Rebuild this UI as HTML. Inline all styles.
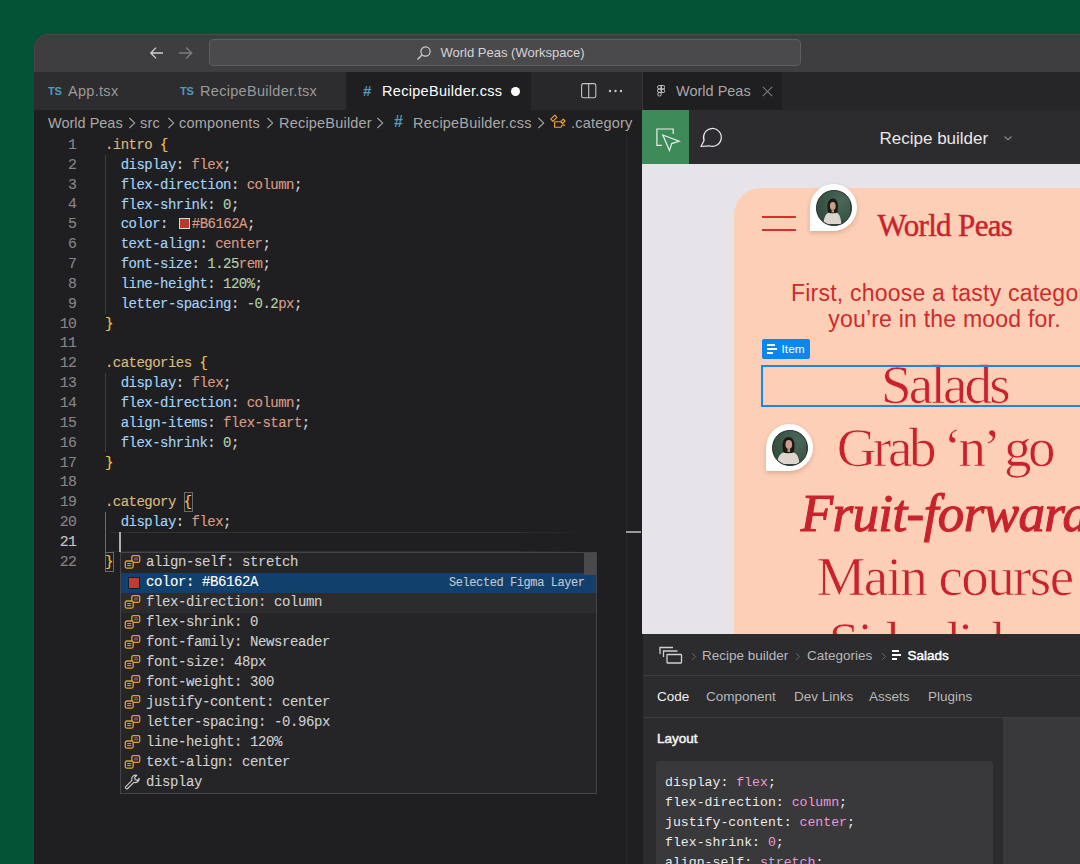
<!DOCTYPE html>
<html><head><meta charset="utf-8">
<style>
*{box-sizing:border-box;margin:0;padding:0}
html,body{width:1080px;height:864px;overflow:hidden;background:#055336;font-family:"Liberation Sans",sans-serif}
.abs{position:absolute}
#win{position:absolute;left:34px;top:34px;width:1100px;height:900px;border-radius:14px 0 0 0;overflow:hidden;background:#1f1e21}
#title{position:absolute;left:0;top:0;width:1100px;height:38px;background:#3e3d40;box-shadow:inset 0 1px 0 #50494b,inset 1px 0 0 #4a4446;border-radius:14px 0 0 0}
#cc{position:absolute;left:175px;top:5px;width:592px;height:27px;background:#4a494c;border:1px solid #5e5d60;border-radius:4px}
#cc span{position:absolute;left:230.5px;top:5px;font-size:13px;color:#d4d4d4;white-space:nowrap}
#tabs{position:absolute;left:0;top:38px;width:608px;height:38px;background:#2d2c2f}
.tab{position:absolute;top:0;height:38px;font-size:14.5px;color:#9a9a9a;white-space:nowrap;letter-spacing:0.3px}
.tab .lbl{position:absolute;top:11px}
.ts{position:absolute;top:13px;font-size:11px;font-weight:bold;color:#519aba;letter-spacing:-0.3px}
#bc{position:absolute;left:14px;top:81px;font-size:14.5px;color:#a8a8a8;white-space:nowrap}
.code{position:absolute;font-family:"Liberation Mono",monospace;font-size:14px;letter-spacing:-0.53px;white-space:pre;line-height:19.86px}
.ln{position:absolute;left:0;width:42px;text-align:right;font-family:"Liberation Mono",monospace;font-size:14.8px;letter-spacing:-0.8px;line-height:19.86px;color:#858585}
.p{color:#a2d3f6}.v{color:#d99a82}.n{color:#b5cea8}.s{color:#d7ba7d}.b{color:#efc63e}.w{color:#d4d4d4}

.sw{display:inline-block;width:11px;height:11px;background:#c2352c;border:1px solid #d9d9d9;margin:0 2px 0 3px;vertical-align:-1px}
.code,.ln{-webkit-text-stroke:0.15px currentColor}
.ig{position:absolute;width:1px;background:#3c3b3e}
#sug{position:absolute;left:86px;top:518px;width:477px;height:242px;background:#252427;border:1px solid #454448}
.row{position:absolute;left:0;width:464px;height:20px;font-family:"Liberation Mono",monospace;font-size:14px;letter-spacing:-0.4px;-webkit-text-stroke:0.1px currentColor;line-height:20px;color:#d0d0d0;white-space:pre}
.row .t{position:absolute;left:25px;top:-0.6px}
.row svg{position:absolute;left:3px;top:2.3px}

#rp{position:absolute;left:608px;top:38px;width:500px;height:870px;background:#2c2b2e}
.serif{font-family:"Liberation Serif",serif;color:#c8232c;white-space:nowrap;position:absolute}
.cat{position:absolute;left:0;width:421px;text-align:center;font-family:"Liberation Serif",serif;font-size:55px;line-height:64px;color:#c8232c;white-space:nowrap;letter-spacing:-1.58px;-webkit-text-stroke:0.7px #fdcfb6}
.pin{position:absolute;width:47px;height:47px;background:#fff;border-radius:50% 50% 50% 0;box-shadow:0 2px 4px rgba(120,60,40,.25)}
.pin .av{position:absolute;left:6px;top:6px;width:35.5px;height:35.5px;border-radius:50%;background:#2f4a3c;border:1.6px solid #2a2a2a;overflow:hidden}
.av svg{position:absolute;left:-1.6px;top:-1.6px}
.bp{position:absolute;font-size:13.5px;color:#b8b8b8;white-space:nowrap}
.mono2{font-family:"Liberation Mono",monospace;font-size:13.2px;line-height:20px;color:#ebebeb;white-space:pre}
.pk{color:#e99bd6}
</style></head><body>
<div id="win">
  <div id="title">
    <svg class="abs" style="left:113px;top:11px" width="18" height="16" viewBox="0 0 18 16"><path d="M16 8H3.8M9 2.6 3.8 8 9 13.4" fill="none" stroke="#d0d0d0" stroke-width="1.3"/></svg>
    <svg class="abs" style="left:143px;top:11px" width="18" height="16" viewBox="0 0 18 16"><path d="M2 8h12.8M9 2.6 14.8 8 9 13.4" fill="none" stroke="#7d7c7f" stroke-width="1.3"/></svg>
    <div id="cc">
      <svg class="abs" style="left:206px;top:5px" width="16" height="16" viewBox="0 0 16 16"><circle cx="9.5" cy="6.5" r="4.6" fill="none" stroke="#cfcfcf" stroke-width="1.2"/><path d="M6.2 9.8 1.5 14.5" stroke="#cfcfcf" stroke-width="1.3"/></svg>
      <span>World Peas (Workspace)</span>
    </div>
  </div>
  <div id="tabs">
    <div class="tab" style="left:0;width:130px"><span class="ts" style="left:14px">TS</span><span class="lbl" style="left:34px">App.tsx</span></div>
    <div class="tab" style="left:130px;width:182px"><span class="ts" style="left:16px">TS</span><span class="lbl" style="left:36px">RecipeBuilder.tsx</span></div>
    <div class="tab" style="left:312px;width:185px;background:#1f1e21;color:#ffffff"><span class="abs" style="left:17px;top:10px;font-size:15px;font-weight:bold;color:#519aba">#</span><span class="lbl" style="left:36px">RecipeBuilder.css</span>
      <div class="abs" style="left:165px;top:15px;width:9px;height:9px;border-radius:50%;background:#ffffff"></div></div>
    <div class="tab" style="left:497px;width:111px;background:#28272a">
      <svg class="abs" style="left:49.5px;top:11px" width="16" height="16" viewBox="0 0 16 16"><rect x="0.6" y="0.6" width="14.2" height="14.2" rx="1.8" fill="none" stroke="#c5c5c5" stroke-width="1.1"/><path d="M7.7 1v14" stroke="#c5c5c5" stroke-width="1.1"/></svg>
      <svg class="abs" style="left:77px;top:17px" width="16" height="4" viewBox="0 0 16 4"><circle cx="2" cy="2" r="1.2" fill="#c5c5c5"/><circle cx="7.5" cy="2" r="1.2" fill="#c5c5c5"/><circle cx="13" cy="2" r="1.2" fill="#c5c5c5"/></svg>
    </div>
  </div>
  <div class="abs" style="left:0;top:76px;width:608px;height:25px;font-size:14.5px;color:#a8a8a8;white-space:nowrap;letter-spacing:0.2px">
<span class="abs" style="left:14px;top:4.5px;letter-spacing:0">World Peas</span>
<span class="abs" style="left:106px;top:4.5px">src</span>
<span class="abs" style="left:145px;top:4.5px">components</span>
<span class="abs" style="left:245px;top:4.5px">RecipeBuilder</span>
<span class="abs" style="left:360px;top:2.5px;font-weight:bold;color:#519aba;font-size:16px">#</span>
<span class="abs" style="left:379px;top:4.5px">RecipeBuilder.css</span>
<span class="abs" style="left:537px;top:4.5px">.category</span>
</div>
<svg class="abs" style="left:94px;top:82.5px" width="8" height="12" viewBox="0 0 8 12"><path d="M1.4 1 6.7 6 1.4 11" fill="none" stroke="#a0a0a0" stroke-width="1.1"/></svg><svg class="abs" style="left:133px;top:82.5px" width="8" height="12" viewBox="0 0 8 12"><path d="M1.4 1 6.7 6 1.4 11" fill="none" stroke="#a0a0a0" stroke-width="1.1"/></svg><svg class="abs" style="left:232px;top:82.5px" width="8" height="12" viewBox="0 0 8 12"><path d="M1.4 1 6.7 6 1.4 11" fill="none" stroke="#a0a0a0" stroke-width="1.1"/></svg><svg class="abs" style="left:341.5px;top:82.5px" width="8" height="12" viewBox="0 0 8 12"><path d="M1.4 1 6.7 6 1.4 11" fill="none" stroke="#a0a0a0" stroke-width="1.1"/></svg><svg class="abs" style="left:503px;top:82.5px" width="8" height="12" viewBox="0 0 8 12"><path d="M1.4 1 6.7 6 1.4 11" fill="none" stroke="#a0a0a0" stroke-width="1.1"/></svg>
<svg class="abs" style="left:514px;top:79px" width="20" height="17" viewBox="0 0 20 17"><g fill="none" stroke="#e8a33e" stroke-width="1.15" stroke-linejoin="round"><path d="M2.8 6.2 6.8 2.1 8.9 4.4 4.9 8.3Z"/><path d="M6.6 8.7V14.2H13.5M6.6 8.7H12.7"/><path d="M12.7 8.7 15.2 6.2 17 8 14.5 10.5Z"/><path d="M13.5 14.2a1.8 1.8 0 0 1 3.3-1.4"/></g></svg>
  <div class="ln" style="top:101.8px">1<br>2<br>3<br>4<br>5<br>6<br>7<br>8<br>9<br>10<br>11<br>12<br>13<br>14<br>15<br>16<br>17<br>18<br>19<br>20<br><span style="color:#c6c6c6">21</span><br>22</div>
<div class="code" style="left:71px;top:102px"><span class="s">.intro</span> <span class="b">{</span>
  <span class="p">display</span><span class="w">:</span> <span class="v">flex</span><span class="w">;</span>
  <span class="p">flex-direction</span><span class="w">:</span> <span class="v">column</span><span class="w">;</span>
  <span class="p">flex-shrink</span><span class="w">:</span> <span class="n">0</span><span class="w">;</span>
  <span class="p">color</span><span class="w">:</span> <i class="sw"></i><span class="v">#B6162A</span><span class="w">;</span>
  <span class="p">text-align</span><span class="w">:</span> <span class="v">center</span><span class="w">;</span>
  <span class="p">font-size</span><span class="w">:</span> <span class="n">1.25</span><span class="v">rem</span><span class="w">;</span>
  <span class="p">line-height</span><span class="w">:</span> <span class="n">120%</span><span class="w">;</span>
  <span class="p">letter-spacing</span><span class="w">:</span> <span class="n">-0.2</span><span class="v">px</span><span class="w">;</span>
<span class="b">}</span>

<span class="s">.categories</span> <span class="b">{</span>
  <span class="p">display</span><span class="w">:</span> <span class="v">flex</span><span class="w">;</span>
  <span class="p">flex-direction</span><span class="w">:</span> <span class="v">column</span><span class="w">;</span>
  <span class="p">align-items</span><span class="w">:</span> <span class="v">flex-start</span><span class="w">;</span>
  <span class="p">flex-shrink</span><span class="w">:</span> <span class="n">0</span><span class="w">;</span>
<span class="b">}</span>

<span class="s">.category</span> <span class="b">{</span>
  <span class="p">display</span><span class="w">:</span> <span class="v">flex</span><span class="w">;</span>

<span class="b">}</span></div>

<div class="ig" style="left:71px;top:120.7px;height:158.9px"></div>
<div class="ig" style="left:71px;top:339.1px;height:79.4px"></div>
<div class="ig" style="left:71px;top:478.1px;height:39.9px;background:#6a696c"></div>
<div class="abs" style="left:77px;top:498px;width:480px;height:20px;border-top:1.5px solid #302f32;border-bottom:1px solid #302f32;-webkit-mask-image:linear-gradient(to right,#000 85%,transparent)"></div>
<div class="abs" style="left:85px;top:498px;width:2px;height:20px;background:#aeafad"></div>
<div class="abs" style="left:150px;top:458.3px;width:8.5px;height:20px;border:1px solid #6a6a6a"></div>
<div class="abs" style="left:71px;top:517.9px;width:8.5px;height:20px;border:1px solid #6a6a6a"></div>
<div class="abs" style="left:592px;top:100px;width:1px;height:806px;background:#28272a"></div>
<div class="abs" style="left:592px;top:497px;width:15px;height:2px;background:#9a9a9a"></div>
<div id="sug"><div class="row" style="top:0px"><svg width="17" height="15" viewBox="0 0 17 15"><rect x="7.8" y="0.6" width="7.9" height="6.8" rx="1.5" fill="none" stroke="#e0a13c" stroke-width="1.3"/><path d="M10 3h4M10 4.8h4" stroke="#9a7435" stroke-width="1"/><rect x="1.3" y="6" width="7.9" height="7.1" rx="1.5" fill="#252427" stroke="#e0a13c" stroke-width="1.3"/><path d="M3.2 8.6h4M3.2 10.6h4" stroke="#e0a13c" stroke-width="1"/></svg><span class="t">align-self: stretch</span></div><div class="row" style="top:20px;width:475px;background:#12406c;color:#ffffff"><div class="abs" style="left:7px;top:4px;width:12px;height:12px;background:#c8382c;border:1px solid #0c1f33"></div><span class="t">color: #B6162A</span><span class="abs" style="left:328px;top:0;font-size:12px;letter-spacing:-0.42px;color:#c0c8d4">Selected Figma Layer</span></div><div class="row" style="top:40px;width:475px;background:#2c2b2e"><svg width="17" height="15" viewBox="0 0 17 15"><rect x="7.8" y="0.6" width="7.9" height="6.8" rx="1.5" fill="none" stroke="#e0a13c" stroke-width="1.3"/><path d="M10 3h4M10 4.8h4" stroke="#9a7435" stroke-width="1"/><rect x="1.3" y="6" width="7.9" height="7.1" rx="1.5" fill="#252427" stroke="#e0a13c" stroke-width="1.3"/><path d="M3.2 8.6h4M3.2 10.6h4" stroke="#e0a13c" stroke-width="1"/></svg><span class="t">flex-direction: column</span></div><div class="row" style="top:60px"><svg width="17" height="15" viewBox="0 0 17 15"><rect x="7.8" y="0.6" width="7.9" height="6.8" rx="1.5" fill="none" stroke="#e0a13c" stroke-width="1.3"/><path d="M10 3h4M10 4.8h4" stroke="#9a7435" stroke-width="1"/><rect x="1.3" y="6" width="7.9" height="7.1" rx="1.5" fill="#252427" stroke="#e0a13c" stroke-width="1.3"/><path d="M3.2 8.6h4M3.2 10.6h4" stroke="#e0a13c" stroke-width="1"/></svg><span class="t">flex-shrink: 0</span></div><div class="row" style="top:80px"><svg width="17" height="15" viewBox="0 0 17 15"><rect x="7.8" y="0.6" width="7.9" height="6.8" rx="1.5" fill="none" stroke="#e0a13c" stroke-width="1.3"/><path d="M10 3h4M10 4.8h4" stroke="#9a7435" stroke-width="1"/><rect x="1.3" y="6" width="7.9" height="7.1" rx="1.5" fill="#252427" stroke="#e0a13c" stroke-width="1.3"/><path d="M3.2 8.6h4M3.2 10.6h4" stroke="#e0a13c" stroke-width="1"/></svg><span class="t">font-family: Newsreader</span></div><div class="row" style="top:100px"><svg width="17" height="15" viewBox="0 0 17 15"><rect x="7.8" y="0.6" width="7.9" height="6.8" rx="1.5" fill="none" stroke="#e0a13c" stroke-width="1.3"/><path d="M10 3h4M10 4.8h4" stroke="#9a7435" stroke-width="1"/><rect x="1.3" y="6" width="7.9" height="7.1" rx="1.5" fill="#252427" stroke="#e0a13c" stroke-width="1.3"/><path d="M3.2 8.6h4M3.2 10.6h4" stroke="#e0a13c" stroke-width="1"/></svg><span class="t">font-size: 48px</span></div><div class="row" style="top:120px"><svg width="17" height="15" viewBox="0 0 17 15"><rect x="7.8" y="0.6" width="7.9" height="6.8" rx="1.5" fill="none" stroke="#e0a13c" stroke-width="1.3"/><path d="M10 3h4M10 4.8h4" stroke="#9a7435" stroke-width="1"/><rect x="1.3" y="6" width="7.9" height="7.1" rx="1.5" fill="#252427" stroke="#e0a13c" stroke-width="1.3"/><path d="M3.2 8.6h4M3.2 10.6h4" stroke="#e0a13c" stroke-width="1"/></svg><span class="t">font-weight: 300</span></div><div class="row" style="top:140px"><svg width="17" height="15" viewBox="0 0 17 15"><rect x="7.8" y="0.6" width="7.9" height="6.8" rx="1.5" fill="none" stroke="#e0a13c" stroke-width="1.3"/><path d="M10 3h4M10 4.8h4" stroke="#9a7435" stroke-width="1"/><rect x="1.3" y="6" width="7.9" height="7.1" rx="1.5" fill="#252427" stroke="#e0a13c" stroke-width="1.3"/><path d="M3.2 8.6h4M3.2 10.6h4" stroke="#e0a13c" stroke-width="1"/></svg><span class="t">justify-content: center</span></div><div class="row" style="top:160px"><svg width="17" height="15" viewBox="0 0 17 15"><rect x="7.8" y="0.6" width="7.9" height="6.8" rx="1.5" fill="none" stroke="#e0a13c" stroke-width="1.3"/><path d="M10 3h4M10 4.8h4" stroke="#9a7435" stroke-width="1"/><rect x="1.3" y="6" width="7.9" height="7.1" rx="1.5" fill="#252427" stroke="#e0a13c" stroke-width="1.3"/><path d="M3.2 8.6h4M3.2 10.6h4" stroke="#e0a13c" stroke-width="1"/></svg><span class="t">letter-spacing: -0.96px</span></div><div class="row" style="top:180px"><svg width="17" height="15" viewBox="0 0 17 15"><rect x="7.8" y="0.6" width="7.9" height="6.8" rx="1.5" fill="none" stroke="#e0a13c" stroke-width="1.3"/><path d="M10 3h4M10 4.8h4" stroke="#9a7435" stroke-width="1"/><rect x="1.3" y="6" width="7.9" height="7.1" rx="1.5" fill="#252427" stroke="#e0a13c" stroke-width="1.3"/><path d="M3.2 8.6h4M3.2 10.6h4" stroke="#e0a13c" stroke-width="1"/></svg><span class="t">line-height: 120%</span></div><div class="row" style="top:200px"><svg width="17" height="15" viewBox="0 0 17 15"><rect x="7.8" y="0.6" width="7.9" height="6.8" rx="1.5" fill="none" stroke="#e0a13c" stroke-width="1.3"/><path d="M10 3h4M10 4.8h4" stroke="#9a7435" stroke-width="1"/><rect x="1.3" y="6" width="7.9" height="7.1" rx="1.5" fill="#252427" stroke="#e0a13c" stroke-width="1.3"/><path d="M3.2 8.6h4M3.2 10.6h4" stroke="#e0a13c" stroke-width="1"/></svg><span class="t">text-align: center</span></div><div class="row" style="top:220px"><svg width="18" height="18" viewBox="0 0 18 18" style="left:3px;top:0.5px"><path d="M15.2 4.4a3.9 3.9 0 0 1-5.3 3.9L3.7 14.5a1.35 1.35 0 0 1-1.9-1.9l6.2-6.2A3.9 3.9 0 0 1 12.8 1.3L10.6 3.5l.6 2.3 2.3.6z" fill="none" stroke="#cfcfcf" stroke-width="1.1" stroke-linejoin="round"/></svg><span class="t">display</span></div>
<div class="abs" style="left:463px;top:0;width:12px;height:22px;background:#4a494c"></div>
</div>

<div id="rp">
  <div class="abs" style="left:0;top:0;width:500px;height:38px;background:#262528;border-left:1px solid #38373a"></div>
  <div class="abs" style="left:1px;top:0;width:139px;height:38px;background:#1f1e21"></div>
  <svg class="abs" style="left:14.6px;top:13.3px" width="8.4" height="12.1" viewBox="0 0 9 13"><g fill="none" stroke="#d0d0d0" stroke-width="1"><path d="M4.5 0.5H2.4a1.9 1.9 0 0 0 0 3.8h2.1z"/><path d="M4.5 0.5h2.1a1.9 1.9 0 0 1 0 3.8H4.5z"/><path d="M4.5 4.3H2.4a1.9 1.9 0 0 0 0 3.8h2.1z"/><circle cx="6.5" cy="6.2" r="1.95"/><path d="M4.5 8.1H2.4a1.9 1.9 0 1 0 2.1 1.9z"/></g></svg>
  <span class="abs" style="left:34px;top:11px;font-size:14.5px;color:#a6a6a6;white-space:nowrap">World Peas</span>
  <svg class="abs" style="left:119.5px;top:13.5px" width="11" height="11" viewBox="0 0 11 11"><path d="M0.8 0.8l9.4 9.4M10.2 0.8l-9.4 9.4" stroke="#7a797c" stroke-width="1.1"/></svg>

  <div class="abs" style="left:0;top:38px;width:500px;height:54px;background:#2c2b2e"></div>
  <div class="abs" style="left:0;top:38px;width:47px;height:54px;background:#3e8a59"></div>
  <svg class="abs" style="left:13px;top:55px" width="26" height="26" viewBox="0 0 26 26"><g fill="none" stroke="#e8efe9" stroke-width="1.2"><path d="M7 18.4H1.9V2H18.2V7"/><path d="M7.8 8L24.1 14.3 16.7 16.6 14.5 23.6Z" stroke-linejoin="miter"/></g></svg>
  <svg class="abs" style="left:57px;top:55px" width="24" height="24" viewBox="0 0 24 24"><path d="M5.04 13.44A8.9 8.9 0 1 1 10.36 18.76L2 19.5Z" fill="none" stroke="#e8e8e8" stroke-width="1.25" stroke-linejoin="round"/></svg>
  <span class="abs" style="left:237.5px;top:57px;font-size:17px;color:#e8e8e8;white-space:nowrap">Recipe builder</span>
  <svg class="abs" style="left:361px;top:62px" width="10" height="8" viewBox="0 0 10 8"><path d="M1.5 2.5l3.5 3.2 3.5-3.2" fill="none" stroke="#8a898c" stroke-width="1.2"/></svg>

  <div class="abs" style="left:0;top:92px;width:500px;height:470px;background:#e6e4e8;overflow:hidden">
    <div class="abs" style="left:92px;top:24px;width:440px;height:600px;background:#fdcfb6;border-radius:27px">
      <div class="abs" style="left:28px;top:28px;width:34px;height:2px;background:#d4302c"></div>
      <div class="abs" style="left:28px;top:41px;width:34px;height:2px;background:#d4302c"></div>
      <span class="serif" style="left:143.5px;top:19.5px;font-size:31px;letter-spacing:-0.65px;-webkit-text-stroke:0.45px #c8232c">World Peas</span>
      <div class="abs" style="left:0;top:91.5px;width:421px;text-align:center;font-size:23px;line-height:26px;color:#cd2b2e;letter-spacing:0.22px;white-space:nowrap">First, choose a tasty category<br>you’re in the mood for.</div>
      <div class="cat" style="top:165px;letter-spacing:-2.77px">Salads</div>
      <div class="cat" style="top:228px;letter-spacing:-3.36px">Grab ‘n’ go</div>
      <div class="cat" style="top:293px;font-size:53px;font-style:italic;-webkit-text-stroke:1.1px #c8232c;letter-spacing:-0.6px">Fruit-forward</div>
      <div class="cat" style="top:356.5px">Main course</div>
      <div class="cat" style="top:422px">Side dishes</div>
    </div>
    <div class="pin" style="left:168px;top:20px"><div class="av"><svg width="35" height="35" viewBox="0 0 35 35"><defs><radialGradient id="g1" cx="0.75" cy="0.35" r="0.9"><stop offset="0" stop-color="#4a6857"/><stop offset="1" stop-color="#2d4638"/></radialGradient></defs><rect width="35" height="35" fill="url(#g1)"/><path d="M12.5 18c0-5 2-8.5 5.3-8.5s5.2 3 5.2 8c0 3-.5 5-1 6.5H13.5c-.7-1.8-1-3.5-1-6z" fill="#1e1713"/><ellipse cx="17.8" cy="17" rx="2.9" ry="3.9" fill="#c99e8a"/><path d="M16.6 20h2.4v3.5h-2.4z" fill="#b88d7a"/><path d="M8.5 35c.3-5.5 1.8-10 5-11.2 1.5.8 6.5.8 8 0 3.2 1.2 4.5 5.7 4.8 11.2z" fill="#dcd5ce"/></svg></div></div>
    <div class="pin" style="left:124px;top:260px"><div class="av"><svg width="35" height="35" viewBox="0 0 35 35"><defs><radialGradient id="g1" cx="0.75" cy="0.35" r="0.9"><stop offset="0" stop-color="#4a6857"/><stop offset="1" stop-color="#2d4638"/></radialGradient></defs><rect width="35" height="35" fill="url(#g1)"/><path d="M11.5 16.5c0-5 2.5-8.5 6-8.5s6 3 6 8c0 3.5-.5 6-1 8H13c-1-2-1.5-4.5-1.5-7.5z" fill="#1e1713"/><ellipse cx="17.8" cy="15.5" rx="3.3" ry="4.4" fill="#caa08c"/><path d="M16.5 19h2.6v4h-2.6z" fill="#b88d7a"/><path d="M6 35c.5-6 2.5-10.5 6.5-11.5 1.5 1 8.5 1 10 0 4 1 5.5 5.5 6 11.5z" fill="#ddd6cf"/></svg></div></div>
    <div class="abs" style="left:119.6px;top:175px;width:48px;height:20px;background:#0b87ee;border-radius:2px">
      <div class="abs" style="left:5.3px;top:5.3px;width:8px;height:1.5px;background:#fff"></div>
      <div class="abs" style="left:5.3px;top:9.3px;width:10.2px;height:1.5px;background:#fff"></div>
      <div class="abs" style="left:5.3px;top:13.3px;width:6px;height:1.5px;background:#fff"></div>
      <span class="abs" style="left:20px;top:3px;font-size:11.8px;color:#fff">Item</span>
    </div>
    <div class="abs" style="left:119.4px;top:201px;width:400px;height:42px;border:2px solid #1787ec"></div>
  </div>

  <div class="abs" style="left:0;top:562px;width:500px;height:330px;background:#2c2b2e;border-left:1px solid #1f1e21">
    <div class="abs" style="left:0;top:41px;width:500px;height:1px;background:#3c3b3e"></div>
    <div class="abs" style="left:0;top:83px;width:500px;height:1px;background:#3c3b3e"></div>
    <svg class="abs" style="left:16px;top:12px" width="24" height="18" viewBox="0 0 24 18"><g fill="none" stroke="#d0d0d0" stroke-width="1.3"><path d="M1 8V1.5h13"/><path d="M4.5 11V5h14"/><rect x="8" y="8.5" width="14.5" height="8.5" rx="0.5"/></g></svg>
    <svg class="abs" style="left:48px;top:18px" width="6" height="9" viewBox="0 0 6 9"><path d="M1.2 1.2l3.2 3.3-3.2 3.3" fill="none" stroke="#6a696c" stroke-width="1"/></svg>
    <span class="bp" style="left:59px;top:13.5px">Recipe builder</span>
    <svg class="abs" style="left:152px;top:18px" width="6" height="9" viewBox="0 0 6 9"><path d="M1.2 1.2l3.2 3.3-3.2 3.3" fill="none" stroke="#6a696c" stroke-width="1"/></svg>
    <span class="bp" style="left:164px;top:13.5px">Categories</span>
    <svg class="abs" style="left:238px;top:18px" width="6" height="9" viewBox="0 0 6 9"><path d="M1.2 1.2l3.2 3.3-3.2 3.3" fill="none" stroke="#6a696c" stroke-width="1"/></svg>
    <div class="abs" style="left:249px;top:16.3px;width:7px;height:1.5px;background:#fff"></div>
    <div class="abs" style="left:249px;top:20.3px;width:9.3px;height:1.5px;background:#fff"></div>
    <div class="abs" style="left:249px;top:24.3px;width:5.2px;height:1.5px;background:#fff"></div>
    <span class="bp" style="left:264.5px;top:13.5px;color:#ffffff;-webkit-text-stroke:0.45px #fff">Salads</span>
    <span class="bp" style="left:14px;top:55px;color:#f2f2f2">Code</span>
    <span class="bp" style="left:63px;top:55px">Component</span>
    <span class="bp" style="left:151px;top:55px">Dev Links</span>
    <span class="bp" style="left:226px;top:55px">Assets</span>
    <span class="bp" style="left:285px;top:55px">Plugins</span>
    <span class="bp" style="left:14px;top:97px;color:#f2f2f2;-webkit-text-stroke:0.5px #f2f2f2">Layout</span>
    <div class="abs" style="left:360px;top:84px;width:1px;height:300px;background:#38373a"></div>
    <div class="abs" style="left:361px;top:84px;width:200px;height:300px;background:#39383b"></div>
    <div class="abs" style="left:12.5px;top:127px;width:337px;height:250px;background:#39383b;border-radius:3px"></div>
    <div class="abs mono2" style="left:22px;top:138.5px">display: <span class="pk">flex</span>;
flex-direction: <span class="pk">column</span>;
justify-content: <span class="pk">center</span>;
flex-shrink: <span class="pk">0</span>;
align-self: <span class="pk">stretch</span>;</div>
  </div>
</div>

</div>
</body></html>
